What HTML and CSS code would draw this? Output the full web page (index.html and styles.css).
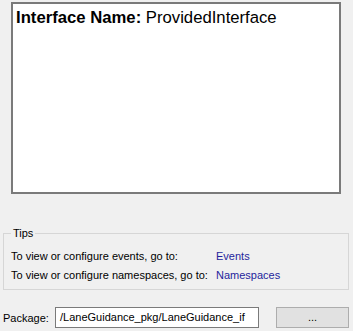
FILE: index.html
```html
<!DOCTYPE html>
<html>
<head>
<meta charset="utf-8">
<link rel="stylesheet" href="styles.css">
</head>
<body>
<div class="page">
  <div class="desc">
    <div class="title"><b>Interface Name:</b> ProvidedInterface</div>
  </div>
  <fieldset class="tips">
    <legend>Tips</legend>
    <div class="tip-row"><span class="tip-label">To view or configure events, go to:</span><span class="link">Events</span></div>
    <div class="tip-row"><span class="tip-label">To view or configure namespaces, go to:</span><span class="link">Namespaces</span></div>
  </fieldset>
  <div class="pkg-row">
    <span class="pkg-label">Package:</span>
    <div class="pkg-input">/LaneGuidance_pkg/LaneGuidance_if</div>
    <div class="pkg-btn">...</div>
  </div>
</div>
</body>
</html>
```
FILE: styles.css
```css
html, body {
  margin: 0;
  padding: 0;
  background: #f0f0f0;
  width: 353px;
  height: 331px;
  overflow: hidden;
}
.page {
  display: flex;
  flex-direction: column;
  font-family: "Liberation Sans", Arial, sans-serif;
  font-size: 11px;
  color: #000;
}
.desc {
  margin: 2px 0 0 11px;
  width: 330px;
  height: 192px;
  box-sizing: border-box;
  border: 2px solid #7a7a7a;
  background: #fff;
  padding: 4px 0 0 3px;
}
.title {
  font-size: 16.7px;
  line-height: 20px;
}
.tips {
  margin: 33px 0 0 3px;
  width: 346px;
  height: 63px;
  box-sizing: border-box;
  border: 1px solid #d6d6d6;
  padding: 6px 0 0 7px;
  min-width: 0;
}
.tips legend {
  padding: 0 2px;
  margin-left: 0;
  font-size: 11px;
  line-height: 13px;
}
.tip-row {
  display: flex;
  height: 19px;
  align-items: center;
}
.tip-label {
  width: 205px;
}
.link {
  color: #1f1f9c;
}
.pkg-row {
  display: flex;
  align-items: center;
  margin: 17px 0 0 3px;
  height: 21px;
}
.pkg-label {
  width: 52px;
}
.pkg-input {
  width: 204px;
  height: 21px;
  box-sizing: border-box;
  border: 1px solid #7a7a7a;
  background: #fff;
  padding: 0 0 0 4px;
  line-height: 19px;
  font-size: 11px;
}
.pkg-btn {
  margin-left: 17px;
  width: 73px;
  height: 21px;
  box-sizing: border-box;
  border: 1px solid #adadad;
  background: #e1e1e1;
  text-align: center;
  line-height: 19px;
}
```
